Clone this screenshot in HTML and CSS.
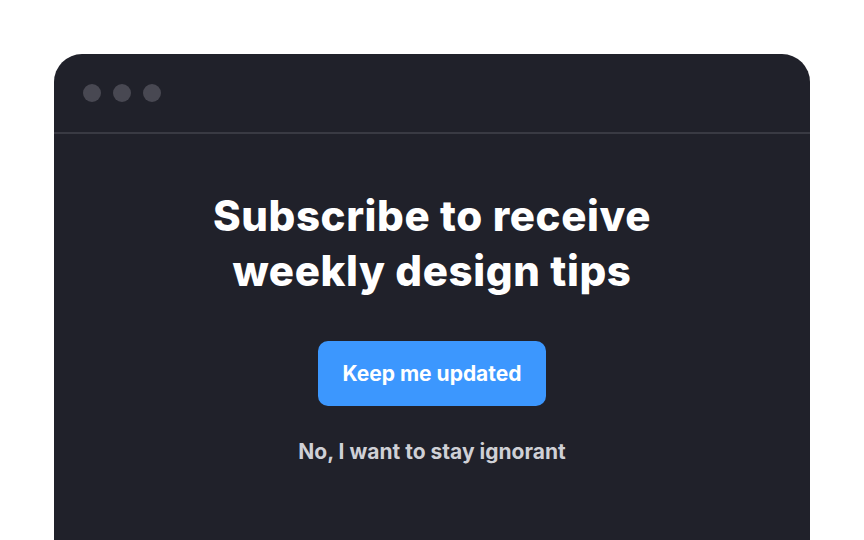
FILE: index.html
```html
<!DOCTYPE html>
<html>
<head>
<meta charset="utf-8">
<link rel="stylesheet" href="styles.css">
</head>
<body>
<div class="window">
  <div class="titlebar">
    <span class="dot"></span><span class="dot"></span><span class="dot"></span>
  </div>
  <div class="content">
    <h1 class="title">Subscribe to receive<br>weekly design tips</h1>
    <button class="cta">Keep me updated</button>
    <a class="dismiss">No, I want to stay ignorant</a>
  </div>
</div>
</body>
</html>
```
FILE: styles.css
```css
html, body {
  margin: 0;
  padding: 0;
  background: #ffffff;
  width: 864px;
  height: 540px;
  overflow: hidden;
}
body {
  padding: 54px 54px 0 54px;
  box-sizing: border-box;
  font-family: Inter, "Noto Sans", sans-serif;
}
.window {
  width: 756px;
  height: 500px;
  background: #20212a;
  border-radius: 28px 28px 0 0;
}
.titlebar {
  height: 78px;
  border-bottom: 2px solid #393a43;
  display: flex;
  align-items: center;
  gap: 12px;
  padding-left: 29px;
  box-sizing: content-box;
}
.dot {
  width: 18px;
  height: 18px;
  border-radius: 50%;
  background: #484852;
}
.content {
  display: flex;
  flex-direction: column;
  align-items: center;
}
.title {
  margin: 54px 0 0 0;
  color: #ffffff;
  font-size: 42px;
  line-height: 55px;
  font-weight: 800;
  text-align: center;
  letter-spacing: 0.6px;
}
.cta {
  margin-top: 43px;
  width: 228px;
  height: 65px;
  border: none;
  border-radius: 10px;
  background: #3c97fe;
  color: #ffffff;
  font-family: Inter, "Noto Sans", sans-serif;
  font-size: 21px;
  font-weight: 700;
}
.dismiss {
  margin-top: 33px;
  color: #cfd0d6;
  font-size: 21px;
  font-weight: 700;
}
```
